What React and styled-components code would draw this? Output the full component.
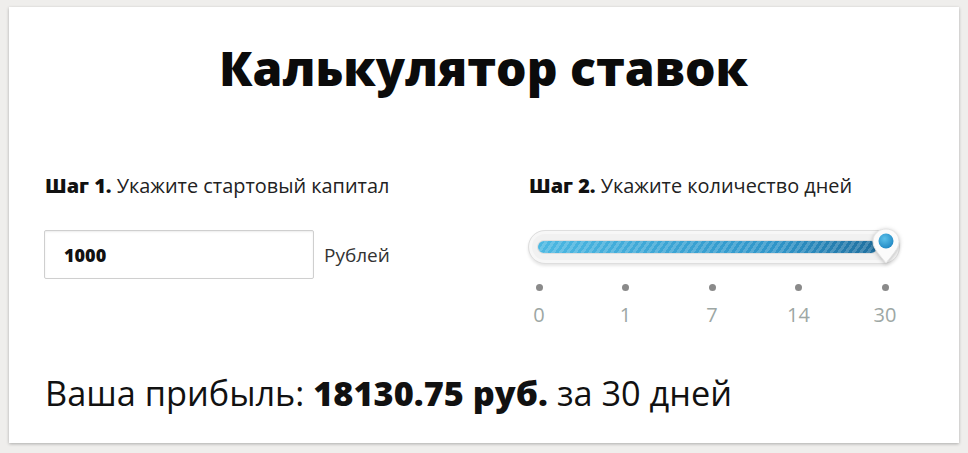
import React from "react";
import styled, { createGlobalStyle } from "styled-components";

const Global = createGlobalStyle`
  html, body { margin: 0; padding: 0; background: #efeeec; }
  body { font-family: "Open Sans", "Noto Sans", sans-serif; color: #111; }
`;

const Page = styled.div`
  padding: 7px 9px 10px 9px;
`;

const Card = styled.div`
  width: 950px;
  height: 436px;
  box-sizing: border-box;
  background: #fff;
  box-shadow: 0 1px 3px rgba(0, 0, 0, 0.28);
  padding: 28px 36px 0 35px;
`;

const Title = styled.h1`
  margin: 0;
  text-align: center;
  font-size: 48px;
  font-weight: 800;
  line-height: 66px;
  color: #0b0b0b;
`;

const Steps = styled.div`
  display: grid;
  grid-template-columns: 484px 1fr;
  margin-top: 71px;
`;

const Step = styled.div`
  display: flex;
  flex-direction: column;
`;

const StepLabel = styled.div`
  font-size: 19.9px;
  line-height: 28px;
  color: #222;
  padding-left: 1px;
  b { font-weight: 800; color: #111; }
`;

const InputRow = styled.div`
  display: flex;
  align-items: center;
  gap: 10px;
  margin-top: 30px;
`;

const Amount = styled.input`
  width: 270px;
  height: 49px;
  box-sizing: border-box;
  border: 1px solid #cfcfcf;
  border-radius: 2px;
  box-shadow: inset 0 1px 2px rgba(0, 0, 0, 0.08);
  padding: 0 19px;
  font-family: inherit;
  font-size: 18px;
  font-weight: 800;
  color: #111;
  outline: none;
`;

const Unit = styled.span`
  font-size: 19px;
  color: #333;
`;

const SliderBox = styled.div`
  position: relative;
  width: 372px;
  margin-top: 30px;
`;

const Track = styled.div`
  height: 34px;
  box-sizing: border-box;
  border-radius: 17px;
  background: #f1f1f1;
  border: 1px solid #dedede;
  box-shadow: 0 2px 3px rgba(0, 0, 0, 0.1), inset 0 0 0 3px #f7f7f7;
  padding: 10px 22px 10px 9px;
  display: flex;
  align-items: center;
`;

const Fill = styled.div`
  height: 12px;
  border-radius: 6px;
  background:
    repeating-linear-gradient(
      -55deg,
      rgba(255, 255, 255, 0.18) 0 3px,
      rgba(255, 255, 255, 0) 3px 6px
    ),
    linear-gradient(to right, #4cb8e2, #2f95c9 70%, #1f6f9f);
  box-shadow: 0 0 0 1px rgba(0, 0, 0, 0.08);
  flex: 1;
`;

const Thumb = styled.svg`
  position: absolute;
  right: -2px;
  top: -4px;
  filter: drop-shadow(0 1px 2px rgba(0, 0, 0, 0.25));
`;

const Scale = styled.div`
  display: flex;
  justify-content: space-between;
  width: 370px;
  margin-top: 20px;
  margin-left: -1px;
`;

const Tick = styled.div`
  width: 24px;
  display: flex;
  flex-direction: column;
  align-items: center;
`;

const Dot = styled.span`
  width: 7px;
  height: 7px;
  border-radius: 50%;
  background: #8a8a8a;
`;

const TickLabel = styled.span`
  margin-top: 11px;
  font-size: 20px;
  font-weight: 400;
  line-height: 26px;
  color: #9da7a4;
`;

const Result = styled.div`
  margin-top: 43px;
  font-size: 34.3px;
  line-height: 44px;
  color: #111;
  padding-left: 1px;
  b { font-weight: 800; }
`;

const ticks = [0, 1, 7, 14, 30];

export default function App() {
  return (
    <>
      <Global />
      <Page>
        <Card>
          <Title>Калькулятор ставок</Title>
          <Steps>
            <Step>
              <StepLabel>
                <b>Шаг 1.</b> Укажите стартовый капитал
              </StepLabel>
              <InputRow>
                <Amount defaultValue="1000" />
                <Unit>Рублей</Unit>
              </InputRow>
            </Step>
            <Step>
              <StepLabel>
                <b>Шаг 2.</b> Укажите количество дней
              </StepLabel>
              <SliderBox>
                <Track>
                  <Fill />
                </Track>
                <Thumb width="32" height="50" viewBox="0 0 32 50">
                  <defs>
                    <radialGradient id="knob" cx="0.4" cy="0.35" r="0.7">
                      <stop offset="0" stopColor="#5cc1ea" />
                      <stop offset="1" stopColor="#1f86c2" />
                    </radialGradient>
                  </defs>
                  <path
                    d="M16 3 C23.5 3 29 8.5 29 15.5 C29 22 24 27 16 37 C8 27 3 22 3 15.5 C3 8.5 8.5 3 16 3 Z"
                    fill="#fbfbfb"
                    stroke="#e4e4e4"
                    strokeWidth="1"
                  />
                  <circle cx="16" cy="15" r="7.5" fill="url(#knob)" />
                </Thumb>
              </SliderBox>
              <Scale>
                {ticks.map((t) => (
                  <Tick key={t}>
                    <Dot />
                    <TickLabel>{t}</TickLabel>
                  </Tick>
                ))}
              </Scale>
            </Step>
          </Steps>
          <Result>
            Ваша прибыль: <b>18130.75 руб.</b> за 30 дней
          </Result>
        </Card>
      </Page>
    </>
  );
}
